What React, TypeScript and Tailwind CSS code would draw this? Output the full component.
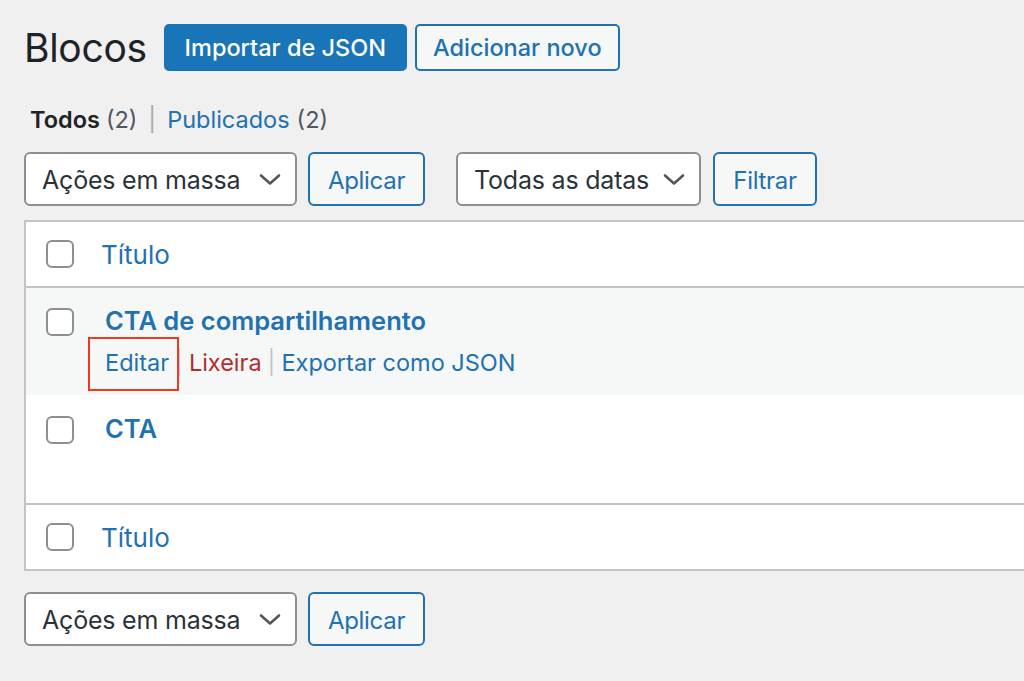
const FONT = "font-['Inter','Roboto','Liberation_Sans',sans-serif]"

function Checkbox() {
  return <span className="block size-[28px] shrink-0 rounded-[6px] border-2 border-[#8c8f94] bg-white" />
}

function Chevron() {
  return (
    <svg width="22" height="13" viewBox="0 0 22 13" fill="none" className="shrink-0">
      <path d="M2 2.5 11 10.5 20 2.5" stroke="#50575e" strokeWidth="2.6" strokeLinecap="round" strokeLinejoin="round" />
    </svg>
  )
}

function Select({ label, width }: { label: string; width: string }) {
  return (
    <div
      className={`flex h-[54px] ${width} items-center justify-between rounded-[6px] border-2 border-[#8c8f94] bg-white pl-[16px] pr-[14px] text-[25px] tracking-[-0.2px] text-[#2c3338]`}
    >
      <span className="pt-[3px]">{label}</span>
      <Chevron />
    </div>
  )
}

function SecondaryButton({ label, width }: { label: string; width: string }) {
  return (
    <button
      className={`flex h-[54px] ${width} items-center justify-center rounded-[6px] border-2 border-[#2271b1] bg-[#f6f7f7] pt-[3px] text-[24px] tracking-[-0.3px] text-[#2271b1]`}
    >
      {label}
    </button>
  )
}

function HeaderRow({ top }: { top?: boolean }) {
  return (
    <div
      className={`flex h-[66px] items-center pl-[20px] ${top ? "border-b-2" : "border-t-2"} border-[#c3c4c7] bg-white`}
    >
      <Checkbox />
      <span className="ml-[27px] text-[26px] text-[#2271b1]">Título</span>
    </div>
  )
}

export default function App() {
  return (
    <div className={`h-[681px] w-[1024px] overflow-hidden bg-[#f0f0f1] ${FONT}`}>
      <div className="pl-6 pt-6">
        <div className="flex h-[47px] items-center">
          <h1 className="mr-[17px] text-[39px] font-normal leading-none tracking-[-0.3px] text-[#1d2327]">Blocos</h1>
          <button className="flex h-[47px] w-[243px] items-center justify-center rounded-[5px] bg-[#1a74b8] text-[23.5px] font-medium text-white">
            Importar de JSON
          </button>
          <button className="ml-[8px] flex h-[47px] w-[205px] items-center justify-center rounded-[5px] border-2 border-[#2271b1] bg-[#f6f7f7] text-[23.5px] font-medium text-[#2271b1]">
            Adicionar novo
          </button>
        </div>

        <div className="mt-[34px] flex h-[30px] items-center pl-[6px] text-[23.5px] text-[#50575e]">
          <span className="font-semibold text-[#1d2327]">Todos</span>
          <span className="ml-[6px]">(2)</span>
          <span className="mx-[11px] text-[#a7aaad]">|</span>
          <span className="text-[#2271b1]">Publicados</span>
          <span className="ml-[7px]">(2)</span>
        </div>

        <div className="mt-[17px] flex items-center">
          <Select label="Ações em massa" width="w-[273px]" />
          <div className="ml-[11px]">
            <SecondaryButton label="Aplicar" width="w-[117px]" />
          </div>
          <div className="ml-[31px]">
            <Select label="Todas as datas" width="w-[245px]" />
          </div>
          <div className="ml-[12px]">
            <SecondaryButton label="Filtrar" width="w-[104px]" />
          </div>
        </div>

        <div className="mt-[14px] w-[1040px] border-2 border-[#c3c4c7] bg-white">
          <HeaderRow top />

          <div className="flex h-[107px] items-start bg-[#f6f7f7] pl-[20px]">
            <div className="pt-[20px]">
              <Checkbox />
            </div>
            <div className="ml-[31px] pt-[16px]">
              <div className="text-[25.5px] font-semibold leading-[34px] text-[#2271b1]">CTA de compartilhamento</div>
              <div className="mt-[8px] flex items-center text-[23.5px] leading-[34px]">
                <span className="relative text-[#2271b1]">
                  Editar
                  <span className="absolute -bottom-[11px] -left-[17px] -right-[10px] -top-[9px] border-2 border-[#f2391f]" />
                </span>
                <span className="mx-[6px] text-[#c3c4c7]">|</span>
                <span className="text-[#b32d2e]">Lixeira</span>
                <span className="mx-[6px] text-[#c3c4c7]">|</span>
                <span className="text-[#2271b1]">Exportar como JSON</span>
              </div>
            </div>
          </div>

          <div className="flex h-[108px] items-start bg-white pl-[20px]">
            <div className="pt-[21px]">
              <Checkbox />
            </div>
            <div className="ml-[31px] pt-[17px] text-[25.5px] font-semibold leading-[34px] text-[#2271b1]">CTA</div>
          </div>

          <HeaderRow />
        </div>

        <div className="mt-[21px] flex items-center">
          <Select label="Ações em massa" width="w-[273px]" />
          <div className="ml-[11px]">
            <SecondaryButton label="Aplicar" width="w-[117px]" />
          </div>
        </div>
      </div>
    </div>
  )
}
